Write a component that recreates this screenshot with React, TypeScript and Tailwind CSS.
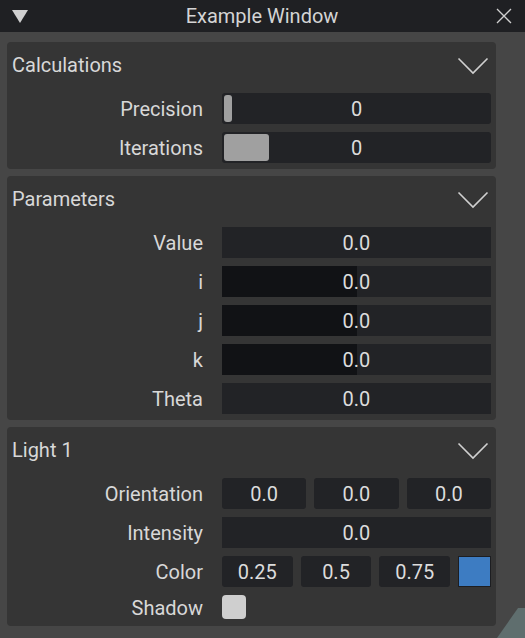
import React from 'react';

const font = { fontFamily: 'Roboto, "Noto Sans", sans-serif' };

const Chevron = () => (
  <svg width="32" height="18" viewBox="0 0 32 18" className="text-[#d0d0d0]">
    <path d="M1.5 1.5 L16 16 L30.5 1.5" fill="none" stroke="currentColor" strokeWidth="1.6" />
  </svg>
);

const Panel: React.FC<{ title: string; children: React.ReactNode }> = ({ title, children }) => (
  <div className="bg-[#353535] rounded-[4px] px-[5px] pb-[6px]">
    <div className="h-[46px] flex items-center justify-between">
      <span className="text-[20px] text-[#d8d8d8]">{title}</span>
      <span className="mr-[2px] mt-[1px]">
        <Chevron />
      </span>
    </div>
    <div className="flex flex-col gap-[8px] pt-[5px]">{children}</div>
  </div>
);

const Row: React.FC<{ label: string; h?: string; children: React.ReactNode }> = ({ label, h = 'h-[31px]', children }) => (
  <div className={`flex ${h}`}>
    <div className="w-[191px] flex items-center justify-end text-[20px] text-[#d8d8d8]">{label}</div>
    <div className="ml-[19px] flex-1 flex gap-[8px]">{children}</div>
  </div>
);

const Slider: React.FC<{ grab: string }> = ({ grab }) => (
  <div className="relative flex-1 bg-[#222326] rounded-[3px] flex items-center justify-center text-[20px] text-[#dcdcdc]">
    <div className={`absolute left-[2px] top-[2px] bottom-[2px] ${grab} bg-[#a0a0a0] rounded-[3px]`} />
    <span className="relative">0</span>
  </div>
);

const Field: React.FC<{ value: string; rounded?: boolean; fill?: boolean }> = ({ value, rounded, fill }) => (
  <div
    className={`relative flex-1 bg-[#222326] ${rounded ? 'rounded-[3px]' : ''} flex items-center justify-center text-[20px] text-[#dcdcdc] overflow-hidden`}
  >
    {fill && <div className="absolute left-0 top-0 bottom-0 w-1/2 bg-[#111215]" />}
    <span className="relative">{value}</span>
  </div>
);

export default function App() {
  return (
    <div className="relative w-[525px] h-[638px] bg-[#464646] overflow-hidden" style={font}>
      <div className="h-[32px] bg-[#1f2023] flex items-center justify-between px-[12px]">
        <svg width="16" height="13" viewBox="0 0 16 13">
          <path d="M0 0 H16 L8 13 Z" fill="#d0d0d0" />
        </svg>
        <span className="text-[20px] text-[#d4d4d4]">Example Window</span>
        <svg width="16" height="16" viewBox="0 0 16 16" className="mr-[1px]">
          <path d="M1 1 L15 15 M15 1 L1 15" stroke="#d0d0d0" strokeWidth="1.3" />
        </svg>
      </div>

      <div className="w-[489px] ml-[7px] mt-[10px] flex flex-col gap-[7px]">
        <Panel title="Calculations">
          <Row label="Precision">
            <Slider grab="w-[8px]" />
          </Row>
          <Row label="Iterations">
            <Slider grab="w-[45px]" />
          </Row>
        </Panel>

        <Panel title="Parameters">
          <Row label="Value">
            <Field value="0.0" />
          </Row>
          <Row label="i">
            <Field value="0.0" fill />
          </Row>
          <Row label="j">
            <Field value="0.0" fill />
          </Row>
          <Row label="k">
            <Field value="0.0" fill />
          </Row>
          <Row label="Theta">
            <Field value="0.0" />
          </Row>
        </Panel>

        <Panel title="Light 1">
          <Row label="Orientation">
            <Field value="0.0" rounded />
            <Field value="0.0" rounded />
            <Field value="0.0" rounded />
          </Row>
          <Row label="Intensity">
            <Field value="0.0" />
          </Row>
          <Row label="Color">
            <Field value="0.25" rounded />
            <Field value="0.5" rounded />
            <Field value="0.75" rounded />
            <div className="w-[33px] bg-[#3d7cc2] border border-[#1d1e21]" />
          </Row>
          <Row label="Shadow" h="h-[25px]">
            <div className="w-[24px] h-[24px] bg-[#cfcfcf] rounded-[4px]" />
          </Row>
        </Panel>
      </div>

      <svg width="28" height="30" viewBox="0 0 28 30" className="absolute right-0 bottom-0">
        <path d="M21 0 H28 V30 H0 Z" fill="#5f6e6e" />
      </svg>
    </div>
  );
}
